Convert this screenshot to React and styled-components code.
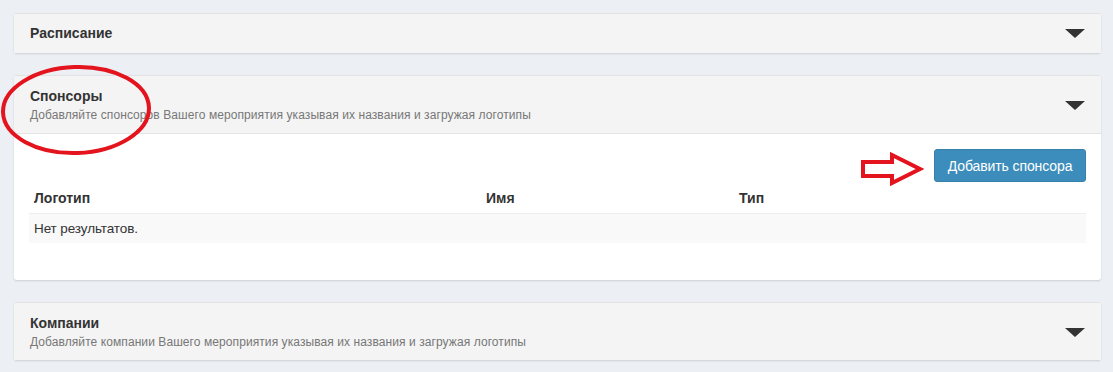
import React from "react";
import styled, { createGlobalStyle } from "styled-components";

const Global = createGlobalStyle`
  body {
    margin: 0;
    background: #ecf0f5;
    font-family: "Liberation Sans", Arial, sans-serif;
    color: #333;
  }
`;

const Page = styled.div`
  position: relative;
  padding: 13px 12px 13px 14px;
  display: flex;
  flex-direction: column;
  gap: 22px;
`;

const Panel = styled.div`
  background: #fff;
  border-top: 1px solid #e2e2e2;
  border-radius: 3px;
  box-shadow: 0 1px 2px rgba(0, 0, 0, 0.14);
`;

const Head = styled.div`
  display: flex;
  align-items: center;
  justify-content: space-between;
  background: #f4f4f4;
  padding: ${(p) => (p.$sub ? "12px 16px 10px" : "11px 16px 11px")};
  border-bottom: ${(p) => (p.$open ? "1px solid #e4e4e4" : "none")};
  border-radius: 3px 3px 0 0;
`;

const Title = styled.div`
  font-size: 14px;
  font-weight: bold;
  line-height: 17px;
  color: #333;
`;

const Sub = styled.div`
  font-size: 12px;
  line-height: 15px;
  color: #777;
  margin-top: 3px;
  letter-spacing: 0.08px;
`;

const Caret = styled.div`
  width: 0;
  height: 0;
  border-left: 10px solid transparent;
  border-right: 10px solid transparent;
  border-top: 9px solid #333;
`;

const Body = styled.div`
  padding: 15px 15px 37px;
`;

const Toolbar = styled.div`
  display: flex;
  justify-content: flex-end;
`;

const Button = styled.button`
  background: #3c8dbc;
  border: 1px solid #367fa9;
  border-radius: 3px;
  color: #fff;
  font-family: inherit;
  font-size: 14px;
  letter-spacing: -0.1px;
  height: 33px;
  width: 152px;
  padding: 0;
`;

const Table = styled.table`
  width: 100%;
  table-layout: fixed;
  border-collapse: collapse;
  margin-top: 1px;
  font-size: 14px;
`;

const Th = styled.th`
  text-align: left;
  font-weight: bold;
  padding: 7px 5px 7px;
  line-height: 16px;
  border-bottom: 1px solid #eeeeee;
  width: ${(p) => p.$w || "auto"};
`;

const Td = styled.td`
  padding: 7px 5px 6px;
  line-height: 16px;
  font-size: 13.5px;
  letter-spacing: -0.1px;
  background: #f9f9f9;
`;

const Ellipse = styled.svg`
  position: absolute;
  left: 0;
  top: 64px;
`;

const Arrow = styled.svg`
  position: absolute;
  left: 860px;
  top: 152px;
`;

export default function App() {
  return (
    <>
      <Global />
      <Page>
        <Panel>
          <Head>
            <Title>Расписание</Title>
            <Caret />
          </Head>
        </Panel>

        <Panel>
          <Head $sub $open>
            <div>
              <Title>Спонсоры</Title>
              <Sub>Добавляйте спонсоров Вашего мероприятия указывая их названия и загружая логотипы</Sub>
            </div>
            <Caret />
          </Head>
          <Body>
            <Toolbar>
              <Button>Добавить спонсора</Button>
            </Toolbar>
            <Table>
              <thead>
                <tr>
                  <Th $w="442px">Логотип</Th>
                  <Th $w="243px">Имя</Th>
                  <Th>Тип</Th>
                </tr>
              </thead>
              <tbody>
                <tr>
                  <Td colSpan={3}>Нет результатов.</Td>
                </tr>
              </tbody>
            </Table>
          </Body>
        </Panel>

        <Panel>
          <Head $sub>
            <div>
              <Title>Компании</Title>
              <Sub>Добавляйте компании Вашего мероприятия указывая их названия и загружая логотипы</Sub>
            </div>
            <Caret />
          </Head>
        </Panel>

        <Ellipse width="154" height="94" viewBox="0 0 154 94">
          <ellipse cx="76" cy="46" rx="73" ry="43" fill="none" stroke="#e3141d" strokeWidth="4" transform="rotate(-2 76 46)" />
        </Ellipse>
        <Arrow width="64" height="34" viewBox="0 0 64 34">
          <path d="M3 10 H32 V3 L60 17 L32 31 V24 H3 Z" fill="#fff" stroke="#e3141d" strokeWidth="4" strokeLinejoin="miter" />
        </Arrow>
      </Page>
    </>
  );
}
